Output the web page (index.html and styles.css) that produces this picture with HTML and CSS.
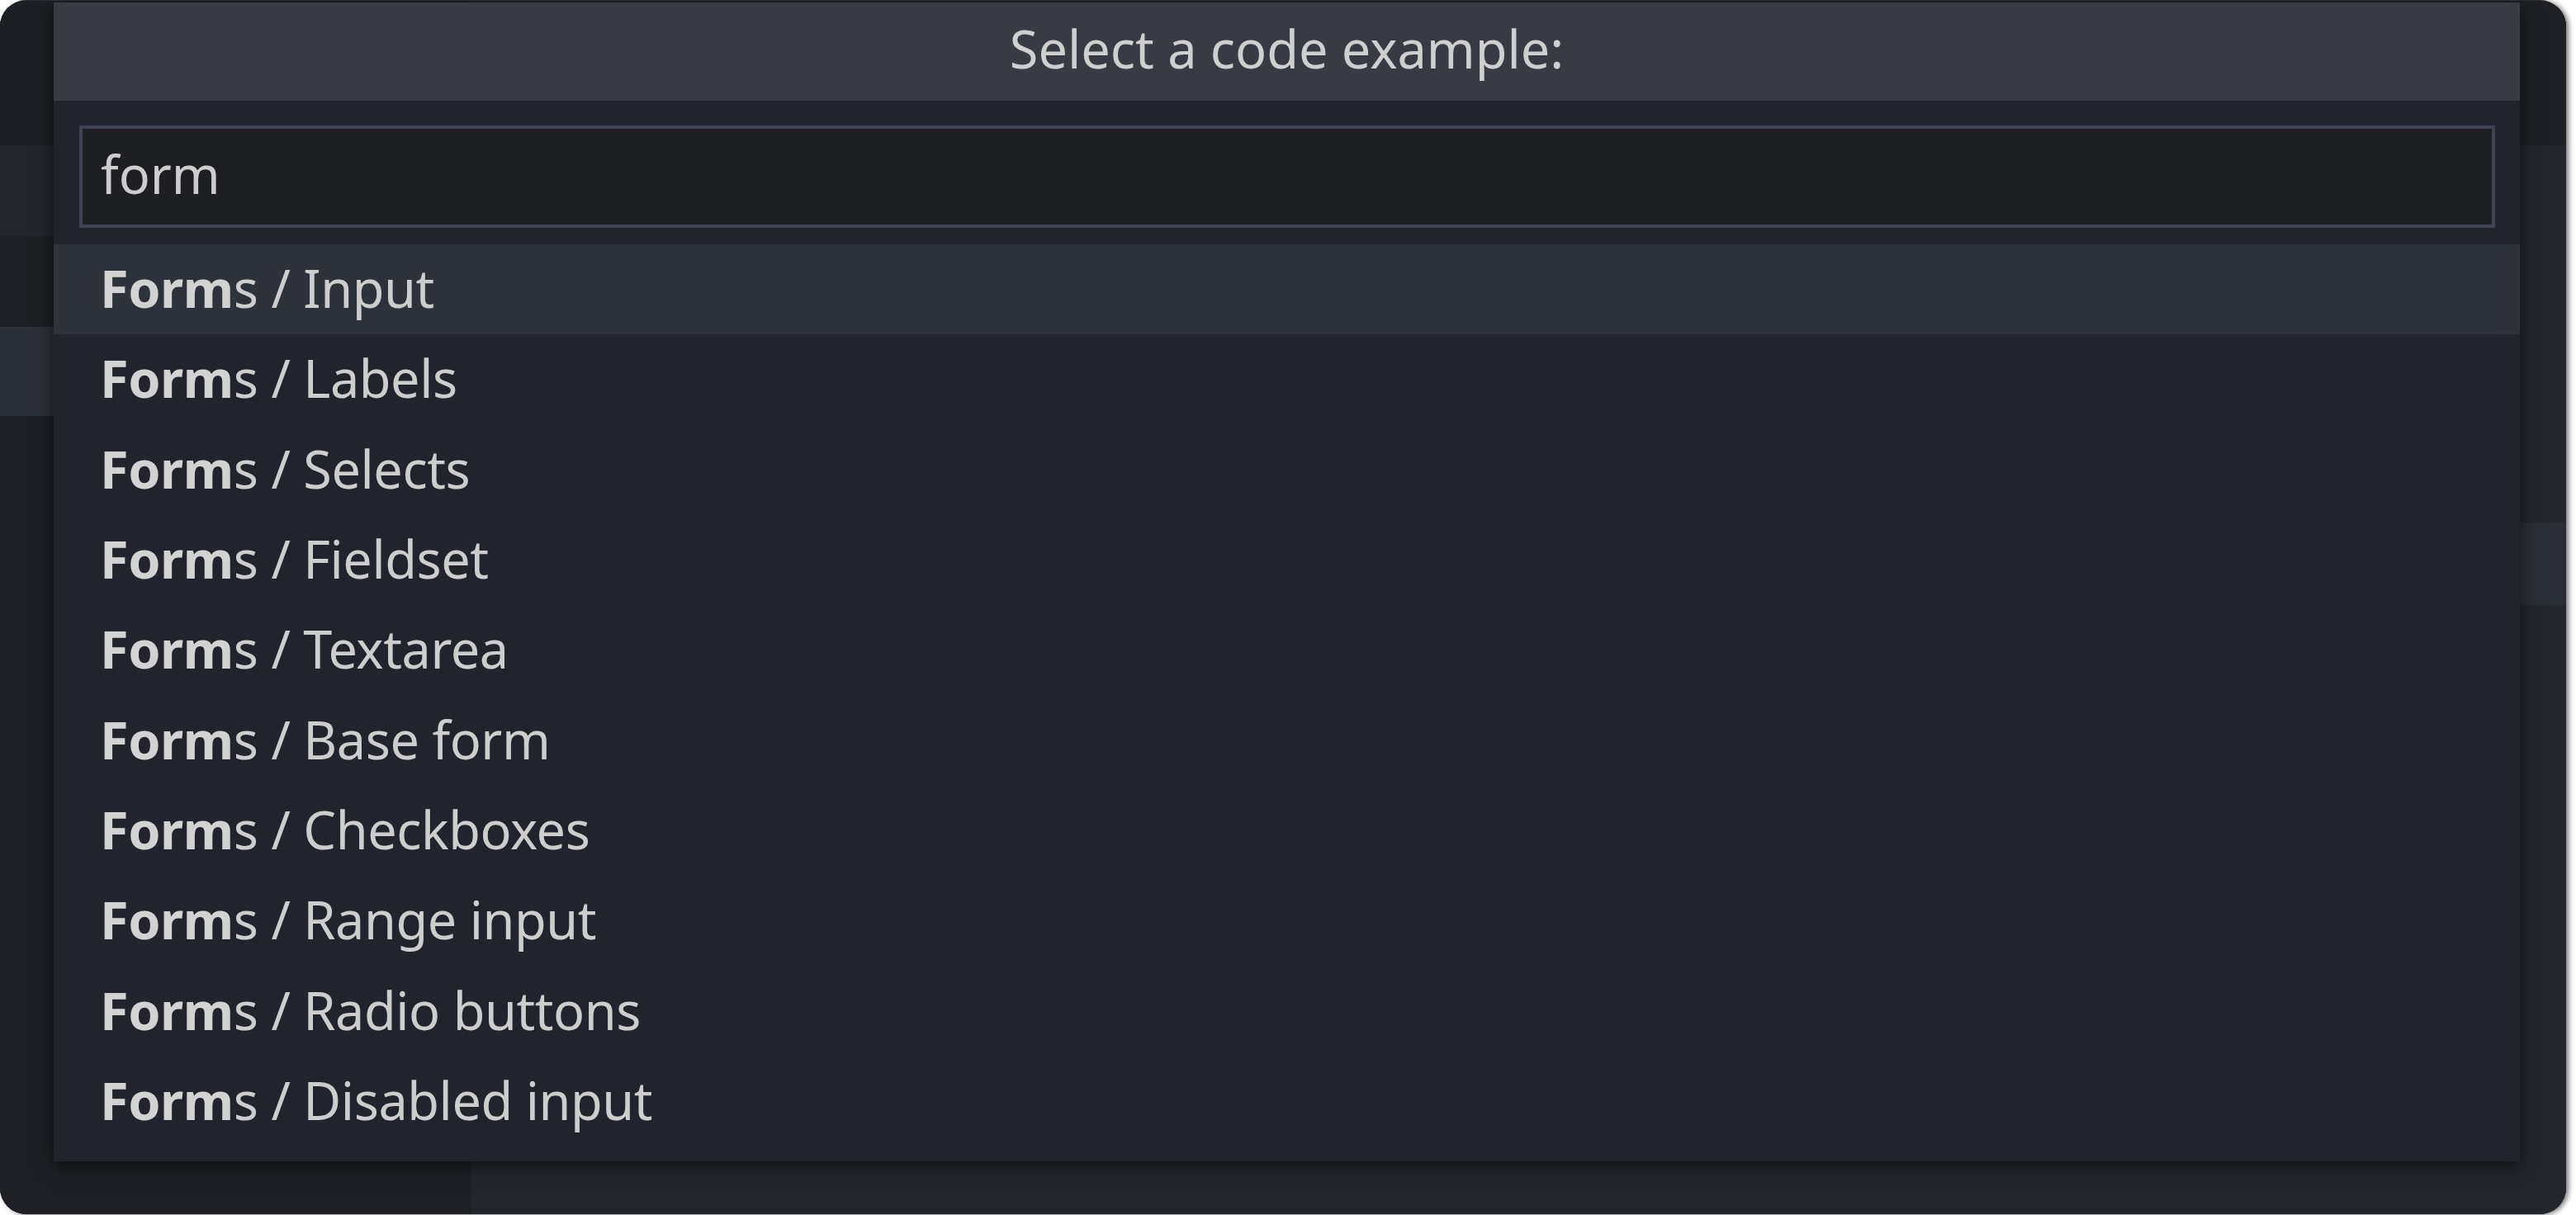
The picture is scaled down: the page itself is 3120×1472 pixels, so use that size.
FILE: index.html
```html
<!DOCTYPE html>
<html>
<head>
<meta charset="utf-8">
<link rel="stylesheet" href="styles.css">
</head>
<body>
<div class="window">
  <div class="app">
    <aside class="sidebar">
      <div class="sb-head"></div>
      <div class="sb-item sb-alt"></div>
      <div class="sb-item"></div>
      <div class="sb-item sb-active"></div>
      <div class="sb-rest"></div>
    </aside>
    <main class="main">
      <div class="main-head"></div>
      <div class="main-body">
        <div class="main-gap"></div>
        <div class="main-line"></div>
      </div>
    </main>
  </div>

  <div class="palette">
    <div class="palette-title">Select a code example:</div>
    <div class="palette-search">
      <div class="search-box">form</div>
    </div>
    <ul class="results">
      <li class="result is-hover"><b>Form</b>s / Input</li>
      <li class="result"><b>Form</b>s / Labels</li>
      <li class="result"><b>Form</b>s / Selects</li>
      <li class="result"><b>Form</b>s / Fieldset</li>
      <li class="result"><b>Form</b>s / Textarea</li>
      <li class="result"><b>Form</b>s / Base form</li>
      <li class="result"><b>Form</b>s / Checkboxes</li>
      <li class="result"><b>Form</b>s / Range input</li>
      <li class="result"><b>Form</b>s / Radio buttons</li>
      <li class="result"><b>Form</b>s / Disabled input</li>
    </ul>
  </div>
</div>
</body>
</html>
```

FILE: styles.css
```css
html, body {
  margin: 0;
  padding: 0;
}
body {
  width: 3120px;
  height: 1472px;
  background: #ffffff;
  overflow: hidden;
  font-family: "Noto Sans", "Open Sans", sans-serif;
}
.window {
  position: relative;
  width: 3108px;
  height: 1471px;
  border-radius: 32px;
  overflow: hidden;
  background: #1e2025;
  box-shadow: 3px 1px 6px rgba(0, 0, 0, 0.55);
  border-top: 1px solid #2a2c31;
  box-sizing: border-box;
}
.app {
  display: flex;
  height: 100%;
}
.sidebar {
  width: 571px;
  display: flex;
  flex-direction: column;
  background: #1e2026;
}
.sb-head {
  height: 175px;
  background: #1c1f24;
}
.sb-item {
  height: 110px;
  background: #1e2025;
}
.sb-alt {
  background: #23262d;
}
.sb-active {
  height: 108px;
  background: #2c3039;
}
.sb-rest {
  flex: 1;
  background: #1e2026;
}
.main {
  flex: 1;
  display: flex;
  flex-direction: column;
  background: #252830;
}
.main-head {
  height: 175px;
  background: #1e2025;
}
.main-body {
  flex: 1;
  display: flex;
  flex-direction: column;
  background: #23262d;
}
.main-gap {
  height: 457px;
}
.main-line {
  height: 100px;
  background: #2a2e37;
}

/* command palette overlay */
.palette {
  position: absolute;
  left: 65px;
  top: 2px;
  width: 2987px;
  height: 1404px;
  background: #21242c;
  box-shadow: 0 6px 22px rgba(0, 0, 0, 0.55);
  display: flex;
  flex-direction: column;
  color: #cdcdcd;
}
.palette-title {
  height: 111px;
  padding-bottom: 8px;
  line-height: 111px;
  background: #383b44;
  text-align: center;
  font-size: 63px;
  color: #cfcfcf;
}
.palette-search {
  padding: 30px 30px 20px 31px;
}
.search-box {
  height: 110px;
  padding: 0 24px 6px 22px;
  line-height: 110px;
  border: 4px solid #3e4452;
  background: #1e1f23;
  font-size: 63px;
  color: #cdcdcd;
}
.results {
  list-style: none;
  margin: 0;
  padding: 0;
}
.result {
  height: 105.33px;
  padding-bottom: 4px;
  line-height: 105.33px;
  padding-left: 56px;
  font-size: 63px;
  letter-spacing: -0.45px;
  color: #cdcdcd;
  white-space: nowrap;
}
.result b {
  font-weight: 700;
  color: #d2d2d2;
}
.is-hover {
  background: #2e323b;
}
```
